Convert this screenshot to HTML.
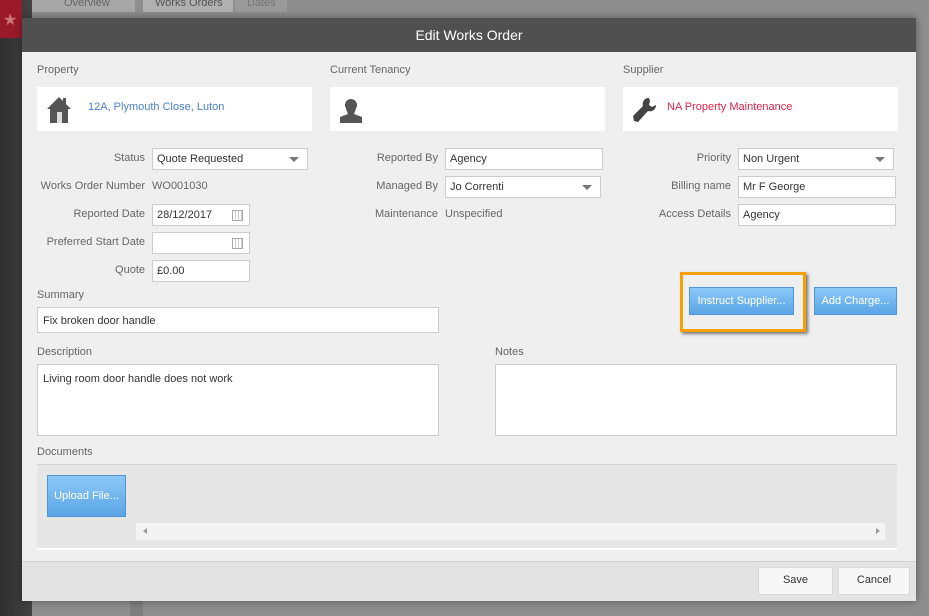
<!DOCTYPE html>
<html><head><meta charset="utf-8"><style>
*{box-sizing:border-box;margin:0;padding:0}
body{width:929px;height:616px;overflow:hidden;position:relative;background:#8e8e8e;font-family:"Liberation Sans",sans-serif;font-size:11px;color:#555}
.a{position:absolute}
.lbl{position:absolute;color:#666;white-space:nowrap}
.r{text-align:right}
.in{position:absolute;background:#fff;border:1px solid #ccc;height:22px;line-height:20px;padding-left:4px;color:#333}
.card{position:absolute;background:#fff;height:44px;top:87px}
.arrow{position:absolute;right:8px;top:8px;width:0;height:0;border-left:5px solid transparent;border-right:5px solid transparent;border-top:5px solid #777}
.cal{position:absolute;right:6px;top:5px;width:11px;height:11px;border:1px solid #aaa;background:repeating-linear-gradient(90deg,#fff 0 2px,#ccc 2px 3px)}
.btn{position:absolute;background:linear-gradient(#8cc8f7,#5aa5e6);border:1px solid #4d97d8;color:#fff;text-align:center}
.wb{position:absolute;background:#f7f7f7;border:1px solid #d8d8d8;color:#333;text-align:center;line-height:25px}
</style></head><body>
<div class="a" style="left:0;top:0;width:32px;height:616px;background:linear-gradient(90deg,#2e2e2e,#444)"></div>
<div class="a" style="left:0;top:0;width:22px;height:38px;background:#9a1a2c"></div>
<div class="a" style="left:3px;top:10px;color:#c77;font-size:16px">★</div>
<div class="a" style="left:32px;top:0;width:103px;height:12px;background:#a8a8a8;color:#666;padding-left:32px;line-height:6px">Overview</div>
<div class="a" style="left:143px;top:0;width:90px;height:12px;background:#b0b0b0;color:#555;padding-left:12px;line-height:6px">Works Orders</div>
<div class="a" style="left:235px;top:0;width:52px;height:12px;background:#9a9a9a;color:#777;padding-left:12px;line-height:6px">Dates</div>
<div class="a" style="left:130px;top:600px;width:13px;height:16px;background:#7e7e7e"></div>

<div class="a" style="left:22px;top:18px;width:894px;height:583px;background:#efefef;box-shadow:0 0 8px rgba(0,0,0,.4)"></div>
<div class="a" style="left:22px;top:18px;width:894px;height:34px;background:#505050;color:#fff;font-size:14px;text-align:center;line-height:34px">Edit Works Order</div>

<div class="lbl" style="left:37px;top:64px">Property</div>
<div class="lbl" style="left:330px;top:64px">Current Tenancy</div>
<div class="lbl" style="left:623px;top:64px">Supplier</div>
<div class="card" style="left:37px;width:275px">
<svg class="a" style="left:9px;top:9px" width="26" height="27" viewBox="0 0 26 27"><path d="M13 1 L1 13 H4 V27 H22 V13 H25 L20 8 V2 H17 V5 Z" fill="#555"/><rect x="11" y="16" width="5" height="11" fill="#ddd"/></svg>
<div class="a" style="left:51px;top:14px;color:#4a7ec4">12A, Plymouth Close, Luton</div></div>
<div class="card" style="left:330px;width:275px">
<svg class="a" style="left:8px;top:10px" width="26" height="26" viewBox="0 0 26 26"><circle cx="13" cy="8" r="6" fill="#555"/><path d="M8 12 L10 17 L2 20 V26 H24 V20 L16 17 L18 12 Z" fill="#555"/></svg></div>
<div class="card" style="left:623px;width:275px">
<svg class="a" style="left:8px;top:10px" width="26" height="26" viewBox="0 0 26 26"><path d="M18 1 A6 6 0 0 0 12 9 L2 19 L3 24 L7 25 L17 14 A6 6 0 0 0 25 8 L21 10 L18 8 L19 4 Z" fill="#444"/></svg>
<div class="a" style="left:44px;top:14px;color:#d4244b">NA Property Maintenance</div></div>

<div class="lbl r" style="right:784px;top:152px">Status</div>
<div class="in" style="left:152px;top:148px;width:156px">Quote Requested<div class="arrow"></div></div>
<div class="lbl r" style="right:784px;top:180px">Works Order Number</div>
<div class="lbl" style="left:152px;top:180px">WO001030</div>
<div class="lbl r" style="right:784px;top:208px">Reported Date</div>
<div class="in" style="left:152px;top:204px;width:98px">28/12/2017<div class="cal"></div></div>
<div class="lbl r" style="right:784px;top:236px">Preferred Start Date</div>
<div class="in" style="left:152px;top:232px;width:98px"><div class="cal"></div></div>
<div class="lbl r" style="right:784px;top:264px">Quote</div>
<div class="in" style="left:152px;top:260px;width:98px">£0.00</div>

<div class="lbl r" style="right:491px;top:152px">Reported By</div>
<div class="in" style="left:445px;top:148px;width:158px">Agency</div>
<div class="lbl r" style="right:491px;top:180px">Managed By</div>
<div class="in" style="left:445px;top:176px;width:156px">Jo Correnti<div class="arrow"></div></div>
<div class="lbl r" style="right:491px;top:208px">Maintenance</div>
<div class="lbl" style="left:445px;top:208px">Unspecified</div>

<div class="lbl r" style="right:198px;top:152px">Priority</div>
<div class="in" style="left:738px;top:148px;width:156px">Non Urgent<div class="arrow"></div></div>
<div class="lbl r" style="right:198px;top:180px">Billing name</div>
<div class="in" style="left:738px;top:176px;width:158px">Mr F George</div>
<div class="lbl r" style="right:198px;top:208px">Access Details</div>
<div class="in" style="left:738px;top:204px;width:158px">Agency</div>

<div class="a" style="left:680px;top:272px;width:126px;height:60px;border:3px solid #f5a000;box-shadow:2px 2px 3px rgba(0,0,0,.5)"></div>
<div class="btn" style="left:689px;top:287px;width:105px;height:28px;line-height:26px">Instruct Supplier...</div>
<div class="btn" style="left:814px;top:287px;width:83px;height:28px;line-height:26px">Add Charge...</div>

<div class="lbl" style="left:37px;top:289px">Summary</div>
<div class="in" style="left:37px;top:307px;width:402px;height:26px;line-height:26px;padding-left:5px">Fix broken door handle</div>
<div class="lbl" style="left:37px;top:346px">Description</div>
<div class="in" style="left:37px;top:364px;width:402px;height:72px;padding-left:5px;line-height:28px">Living room door handle does not work</div>
<div class="lbl" style="left:495px;top:346px">Notes</div>
<div class="in" style="left:495px;top:364px;width:402px;height:72px"></div>

<div class="lbl" style="left:37px;top:446px">Documents</div>
<div class="a" style="left:37px;top:464px;width:860px;height:86px;background:#e6e6e6;border-top:1px solid #d2d2d2;border-bottom:2px solid #fff"></div>
<div class="btn" style="left:47px;top:475px;width:79px;height:42px;line-height:40px">Upload File...</div>
<div class="a" style="left:136px;top:523px;width:749px;height:17px;background:#f3f3f3"></div>
<div class="a" style="left:143px;top:528px;border-right:4px solid #999;border-top:3px solid transparent;border-bottom:3px solid transparent"></div>
<div class="a" style="left:876px;top:528px;border-left:4px solid #999;border-top:3px solid transparent;border-bottom:3px solid transparent"></div>

<div class="a" style="left:22px;top:561px;width:894px;height:40px;background:#e3e3e3;border-top:1px solid #d0d0d0"></div>
<div class="wb" style="left:758px;top:567px;width:75px;height:28px">Save</div>
<div class="wb" style="left:838px;top:567px;width:72px;height:28px">Cancel</div>
</body></html>
